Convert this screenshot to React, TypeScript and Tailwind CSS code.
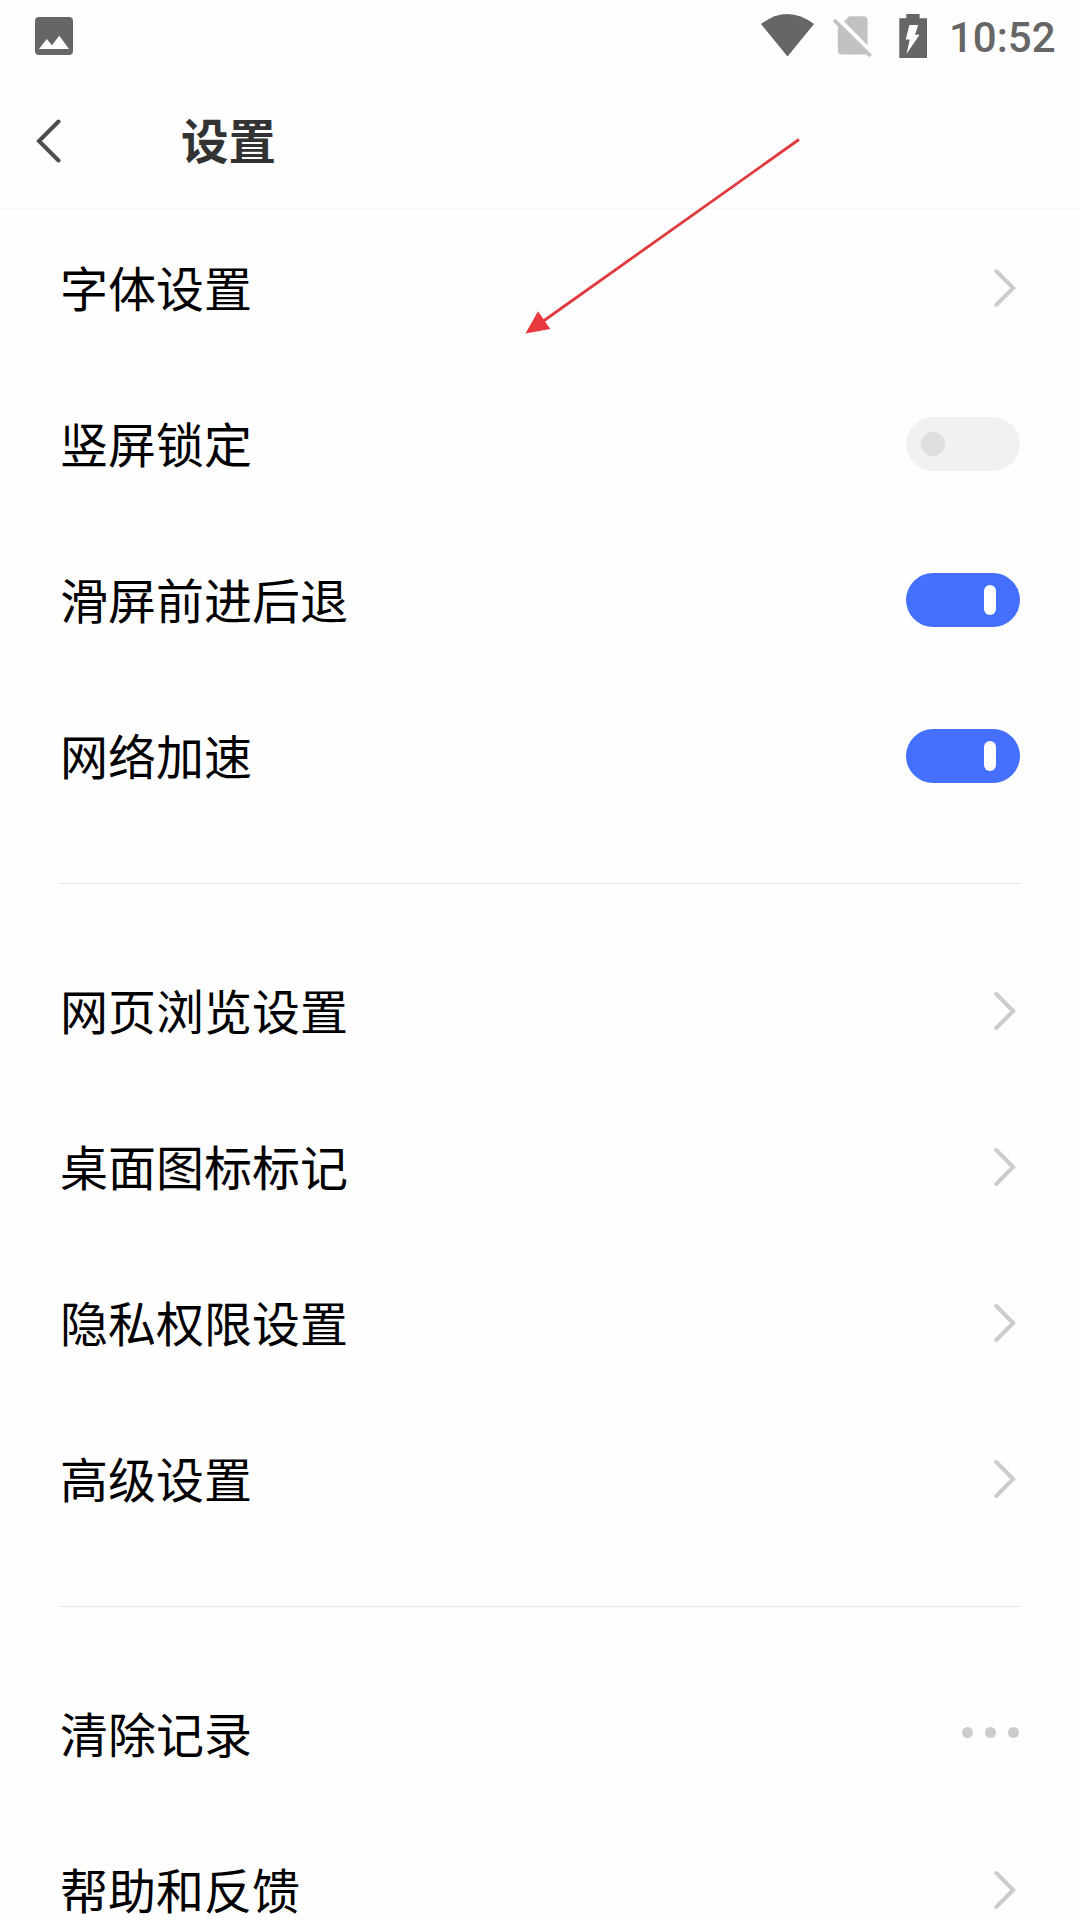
import React from "react";

type Control = "chevron" | "off" | "on" | "dots";
type Item = { label: string; control: Control };

const groups: Item[][] = [
  [
    { label: "字体设置", control: "chevron" },
    { label: "竖屏锁定", control: "off" },
    { label: "滑屏前进后退", control: "on" },
    { label: "网络加速", control: "on" },
  ],
  [
    { label: "网页浏览设置", control: "chevron" },
    { label: "桌面图标标记", control: "chevron" },
    { label: "隐私权限设置", control: "chevron" },
    { label: "高级设置", control: "chevron" },
  ],
  [
    { label: "清除记录", control: "dots" },
    { label: "帮助和反馈", control: "chevron" },
  ],
];

function Trailing({ control }: { control: Control }) {
  if (control === "chevron")
    return (
      <svg className="mr-[3px] h-10 w-6" viewBox="0 0 24 40" fill="none" stroke="#cccccc" strokeWidth="4" strokeLinecap="round">
        <path d="M3.2 3L20.2 20L3.2 37" />
      </svg>
    );
  if (control === "dots")
    return (
      <div className="mr-px mb-[3px] flex gap-3">
        <span className="size-[11px] rounded-full bg-[#cccccc]" />
        <span className="size-[11px] rounded-full bg-[#cccccc]" />
        <span className="size-[11px] rounded-full bg-[#cccccc]" />
      </div>
    );
  if (control === "off")
    return (
      <div className="flex h-[54px] w-[114px] items-center rounded-full bg-[#f1f1f1] pl-[15px]">
        <span className="size-6 rounded-full bg-[#dedede]" />
      </div>
    );
  return (
    <div className="flex h-[54px] w-[114px] items-center justify-end rounded-full bg-[#456fff] pr-6">
      <span className="h-[30px] w-3 rounded-full bg-white" />
    </div>
  );
}

function StatusBar() {
  return (
    <div className="flex h-[72px] shrink-0 items-center justify-between pr-[25px] pl-[35px]">
      <svg className="size-[38px]" viewBox="0 0 38 38">
        <rect width="38" height="38" rx="4" fill="#666666" />
        <path d="M4 32L11.7 22L17 28.3L24.3 18.7L34 32Z" fill="#ffffff" />
      </svg>
      <div className="flex h-full items-center">
        <svg className="h-[72px] w-[190px]" viewBox="0 0 190 72">
          <path d="M21 24Q47.3 4 74 24L47.5 56.5Z" fill="#666666" />
          <path d="M97.8 24L127 54.6H102C99 54.6 97.8 53.2 97.8 50.5Z" fill="#c2c2c2" />
          <path d="M104 21.5L109.2 16.3H123.5Q127.6 16.3 127.6 20.5V45.3Z" fill="#c2c2c2" />
          <path d="M94 20L130.6 56" stroke="#c2c2c2" strokeWidth="3.8" />
          <path d="M159.3 18.3H166.3V14H179.6V18.3H187V58H159.3Z" fill="#666666" />
          <path d="M169.3 25H178.2L175 34.7H179.5L166.5 54L169.8 39.6H165.8Z" fill="#ffffff" />
        </svg>
        <span className="ml-[19px] w-[106px] pt-[3px] font-[Roboto] text-[42px] leading-none font-medium text-[#666666]">10:52</span>
      </div>
    </div>
  );
}

export default function App() {
  return (
    <div className="relative flex h-[1920px] w-[1080px] flex-col overflow-hidden bg-[#fefefe] font-['Noto_Sans_CJK_SC',sans-serif]">
      <StatusBar />
      <header className="flex h-[138px] shrink-0 items-center border-b-3 border-[#f9f9f9] pl-9">
        <svg className="mt-0.5 h-11 w-[26px]" viewBox="0 0 26 44" fill="none" stroke="#4d4d4d" strokeWidth="4" strokeLinecap="round">
          <path d="M22.5 2.5L3 22L22.5 41.5" />
        </svg>
        <h1 className="mb-0.5 ml-[119px] text-[47.5px] leading-none font-bold text-[#333333]">设置</h1>
      </header>
      <main className="flex flex-col px-[60px]">
        {groups.map((items, i) => (
          <section key={i} className={i > 0 ? "mt-[49px] border-t border-[#e5e5e5] pt-[49px]" : ""}>
            {items.map((item) => (
              <div key={item.label} className="flex h-[156px] items-center justify-between">
                <span className="mb-1 text-[48px] leading-none text-black">{item.label}</span>
                <Trailing control={item.control} />
              </div>
            ))}
          </section>
        ))}
      </main>
      <svg className="pointer-events-none absolute top-[130px] left-[520px] h-[210px] w-[290px]" viewBox="520 130 290 210">
        <path d="M799 139.5L542 322" stroke="#e0393e" strokeWidth="2.8" />
        <path d="M525.5 333.5L538 311.3L550.3 329Z" fill="#e8393e" />
      </svg>
    </div>
  );
}
